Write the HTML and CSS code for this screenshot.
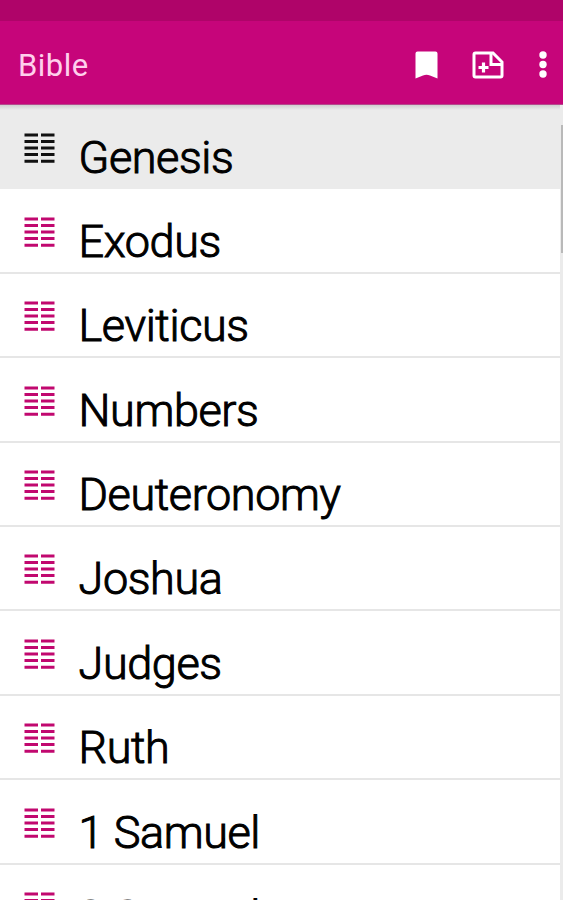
FILE: index.html
```
<!DOCTYPE html>
<html lang="en">
<head>
  <meta charset="UTF-8">
  <meta name="viewport" content="width=device-width, initial-scale=1.0">
  <title>Bible</title>
  <link rel="stylesheet" href="styles.css">
</head>
<body>
<svg class="defs" width="0" height="0">
  <symbol id="columns" viewBox="0 0 31 31">
    <path d="M0.500 2h13.500M17 2h13.500M0.500 8.500h13.500M17 8.500h13.500M0.500 15h13.500M17 15h13.500M0.500 21.600h13.500M17 21.600h13.500M0.500 28.200h13.500M17 28.200h13.500" stroke="currentColor" stroke-width="3"/>
  </symbol>
</svg>
<div class="status-bar"></div>
<header class="app-bar">
  <h1>Bible</h1>
  <svg class="bookmark" width="23" height="28" viewBox="0 0 23 28">
    <path d="M2.500 0.500h18q2 0 2 2v25l-7.500-3q-3.500-1.400-7 0l-7.500 3v-25q0-2 2-2z" fill="#fff"/>
  </svg>
  <svg class="add-note" width="32" height="28" viewBox="0 0 32 28">
    <path d="M3.500 2h17.500l9 9v13.500q0 1.500-1.500 1.500h-25q-1.500 0-1.500-1.500v-21q0-1.500 1.500-1.500z" fill="none" stroke="#fff" stroke-width="3"/>
    <path d="M19 2v11.500h11" fill="none" stroke="#fff" stroke-width="3"/>
    <path d="M11.500 11.500v10M6.500 16.500h10" stroke="#fff" stroke-width="3.200"/>
  </svg>
  <svg class="more" width="8" height="28" viewBox="0 0 8 28">
    <g fill="#fff">
      <circle cx="4" cy="4" r="3.700"/>
      <circle cx="4" cy="13.500" r="3.700"/>
      <circle cx="4" cy="23" r="3.700"/>
    </g>
  </svg>
</header>
<main class="content">
  <ul class="books">
    <li class="book selected"><svg class="icon"><use href="#columns"/></svg><span>Genesis</span></li>
    <li class="book"><svg class="icon"><use href="#columns"/></svg><span>Exodus</span></li>
    <li class="book"><svg class="icon"><use href="#columns"/></svg><span>Leviticus</span></li>
    <li class="book"><svg class="icon"><use href="#columns"/></svg><span>Numbers</span></li>
    <li class="book"><svg class="icon"><use href="#columns"/></svg><span>Deuteronomy</span></li>
    <li class="book"><svg class="icon"><use href="#columns"/></svg><span>Joshua</span></li>
    <li class="book"><svg class="icon"><use href="#columns"/></svg><span>Judges</span></li>
    <li class="book"><svg class="icon"><use href="#columns"/></svg><span>Ruth</span></li>
    <li class="book"><svg class="icon"><use href="#columns"/></svg><span>1 Samuel</span></li>
    <li class="book"><svg class="icon"><use href="#columns"/></svg><span>2 Samuel</span></li>
  </ul>
  <div class="scrollbar"><div class="thumb"></div></div>
</main>
</body>
</html>
```
FILE: styles.css
```
* {
  box-sizing: border-box;
}
body {
  margin: 0;
  height: 900px;
  overflow: hidden;
  display: flex;
  flex-direction: column;
  font-family: Roboto, sans-serif;
  background: #fff;
}
.defs {
  display: none;
}
.status-bar {
  flex: none;
  height: 21px;
  background: #af0469;
}
.app-bar {
  flex: none;
  height: 84px;
  display: flex;
  align-items: center;
  padding: 5px 16px 0 18px;
  background: #c6057a;
  border-bottom: 1px solid #b5488c;
}
.app-bar h1 {
  flex: 1;
  margin: 0;
  font-size: 31px;
  font-weight: 400;
  letter-spacing: 0.5px;
  color: #ffd0ec;
}
.add-note {
  margin-left: 34px;
}
.more {
  margin-left: 35px;
}
.content {
  flex: 1;
  min-height: 0;
  display: flex;
  overflow: hidden;
}
.books {
  flex: 1;
  margin: 0;
  padding: 0;
  list-style: none;
}
.book {
  height: 84.4px;
  display: flex;
  align-items: flex-start;
  padding: 27.5px 0 0 24px;
  border-bottom: 2px solid #e6e6e6;
  color: #c1086f;
}
.book span {
  margin-left: 23.5px;
  font-size: 45px;
  font-weight: 300;
  line-height: 49px;
  letter-spacing: -0.4px;
  color: #000;
  -webkit-text-stroke: 1px #000;
}
.book.selected {
  background: linear-gradient(#cfcfcf, #ebebeb 5px);
  border-color: #ebebeb;
  color: #111;
}
.icon {
  flex: none;
  width: 31px;
  height: 31px;
}
.scrollbar {
  width: 3px;
  padding-top: 20px;
  background: #ebebeb;
}
.thumb {
  width: 2px;
  height: 128px;
  margin-left: 1px;
  background: #b9b9b9;
}
```
